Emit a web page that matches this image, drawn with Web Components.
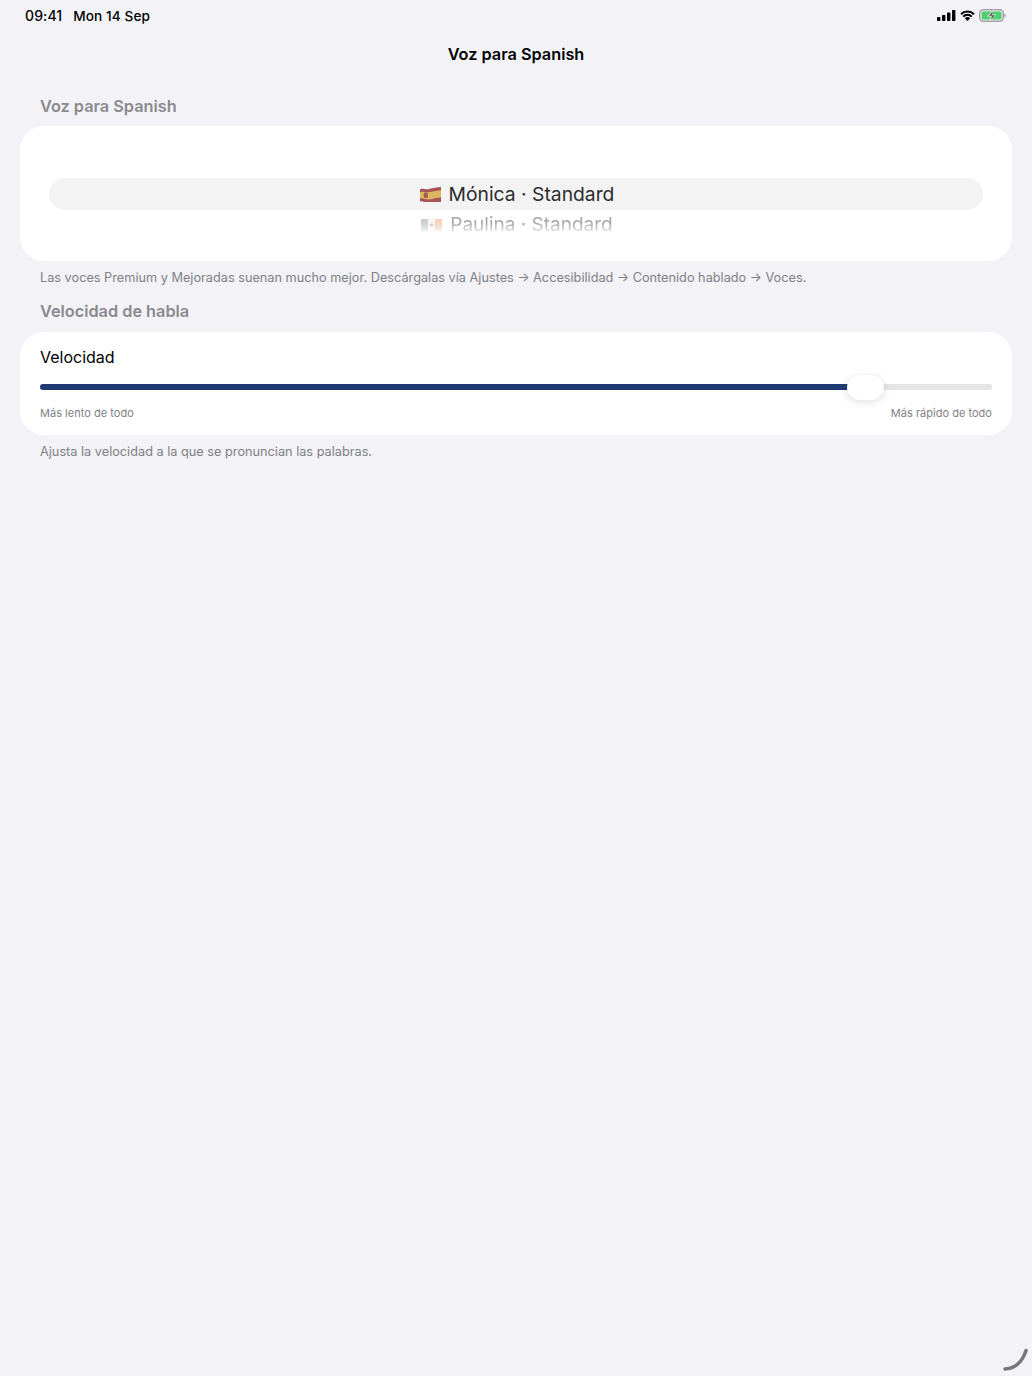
<!doctype html>
<html>
<head>
<meta charset="utf-8">
<style>
html, body { margin: 0; padding: 0; background: #f2f2f7; }
body { width: 1032px; height: 1376px; overflow: hidden; position: relative; font-family: Inter, "Noto Sans", sans-serif; }
</style>
</head>
<body>
<status-bar></status-bar>
<nav-title>Voz para Spanish</nav-title>
<settings-section heading="Voz para Spanish" note="Las voces Premium y Mejoradas suenan mucho mejor. Descárgalas vía Ajustes → Accesibilidad → Contenido hablado → Voces." style="--head-top:19px">
	<voice-picker></voice-picker>
</settings-section>
<settings-section heading="Velocidad de habla" note="Ajusta la velocidad a la que se pronuncian las palabras." style="--head-top:14px;--head-gap:10px">
	<speed-slider></speed-slider>
</settings-section>
<corner-arc></corner-arc>
<script>
customElements.define("status-bar", class extends HTMLElement {
	connectedCallback() {
		this.attachShadow({ mode: "open" }).innerHTML = `
		<style>
			:host { display: flex; justify-content: space-between; align-items: center; height: 32px; padding: 0 25px; font-size: 14px; font-weight: 500; color: #000; }
			.time { display: flex; align-items: center; gap: 11px; letter-spacing: .1px; margin-top: -1px; }
			.date { font-size: 13.6px; }
			.icons { display: flex; align-items: center; gap: 4px; margin-right: 1px; margin-top: -1px; }
			svg { display: block; }
		</style>
		<div class="time"><span>09:41</span><span class="date">Mon 14 Sep</span></div>
		<div class="icons">
			<svg width="19" height="11" viewBox="0 0 19 11"><rect x="0" y="7" width="3.4" height="4" rx=".8"/><rect x="5" y="5" width="3.4" height="6" rx=".8"/><rect x="10" y="2.6" width="3.4" height="8.4" rx=".8"/><rect x="15" y="0" width="3.4" height="11" rx=".8"/></svg>
			<svg width="15" height="11" viewBox="0 0 15 11"><path d="M1 4.2a9.2 9.2 0 0 1 13 0M3.2 6.6a6 6 0 0 1 8.6 0" fill="none" stroke="#000" stroke-width="2"/><path d="M7.5 11L4.8 8.3a3.8 3.8 0 0 1 5.4 0z"/></svg>
			<svg width="27" height="13" viewBox="0 0 27 13"><rect x=".75" y=".75" width="23.5" height="11.5" rx="3.4" fill="#e8e8e8" stroke="#a4a4a8" stroke-width="1.5"/><rect x="2.6" y="2.6" width="19.8" height="7.8" rx="1.6" fill="#4fd06e"/><path d="M25.4 4.5c.9.3 1.4 1.1 1.4 2s-.5 1.700-1.400 2z" fill="#a4a4a8"/><path d="M14.8 .2L7.800 7.500h4L10.200 12.800 17.400 5.500h-4z" fill="#e8e8e8"/><path d="M13.900 2.300L9.800 6.700h3.100l-.9 3.900 4.100-4.400h-3.100z" fill="#58585c"/></svg>
		</div>`;
	}
});

customElements.define("nav-title", class extends HTMLElement {
	connectedCallback() {
		this.attachShadow({ mode: "open" }).innerHTML = `
		<style>
			:host { display: block; height: 44px; line-height: 44px; text-align: center; font-size: 16.3px; font-weight: 600; color: #000; }
		</style>
		<slot></slot>`;
	}
});

customElements.define("settings-section", class extends HTMLElement {
	connectedCallback() {
		this.attachShadow({ mode: "open" }).innerHTML = `
		<style>
			:host { display: block; padding: 0 20px; }
			h2 { margin: var(--head-top, 0) 0 var(--head-gap, 9px) 20px; height: 22px; line-height: 22px; font-size: 16.3px; font-weight: 600; color: #8a8a8e; }
			.card { background: #fff; border-radius: 24px; overflow: hidden; }
			p { margin: 8px 20px 0; height: 17px; line-height: 17px; font-size: 12.72px; color: #818185; }
		</style>
		<h2>${this.getAttribute("heading")}</h2>
		<div class="card"><slot></slot></div>
		<p>${this.getAttribute("note")}</p>`;
	}
});

customElements.define("voice-picker", class extends HTMLElement {
	connectedCallback() {
		this.attachShadow({ mode: "open" }).innerHTML = `
		<style>
			:host { display: block; height: 135px; padding: 52px 29px 0; box-sizing: border-box; color: #2b2b2d; }
			.row { display: flex; justify-content: center; align-items: center; gap: 8px; padding-left: 2px; }
			.sel { height: 32px; background: #f3f3f3; border-radius: 16px; font-size: 19.3px; }
			.next { height: 28px; margin-top: 3px; align-items: flex-start; font-size: 19px; line-height: 24px; color: #a8a8aa;
				-webkit-mask-image: linear-gradient(#000 35%, rgba(0,0,0,.4) 62%, transparent 72%); mask-image: linear-gradient(#000 35%, rgba(0,0,0,.4) 62%, transparent 72%); }
			svg { display: block; }
			.next svg { margin-top: 6px; opacity: .6; }
		</style>
		<div class="row sel">
			<svg width="21" height="15" viewBox="0 0 21 15"><path d="M0 2.200C3 .6 5 3 9 2s8-2 12-2v15c-4 0-7 .8-11 1.600S3 13 0 14.600z" fill="#a8525a"/><path d="M0 5.200C3 4 6 6 10 5s7-1.600 11-1.600v7.200c-4 0-7 1-11 1.800S3 10.600 0 11.400z" fill="#dcb660"/><rect x="3.800" y="5.500" width="4" height="5.500" rx="1.200" fill="#a25a4c"/></svg>
			<span>Mónica · Standard</span>
		</div>
		<div class="row next">
			<svg width="21" height="12" viewBox="0 0 21 12"><rect width="7" height="12" fill="#a7b3ad"/><rect x="7" width="7" height="12" fill="#f4f1ec"/><rect x="14" width="7" height="12" fill="#eeb493"/><circle cx="10.500" cy="6" r="1.600" fill="#b79a7a"/></svg>
			<span>Paulina · Standard</span>
		</div>`;
	}
});

customElements.define("speed-slider", class extends HTMLElement {
	connectedCallback() {
		this.attachShadow({ mode: "open" }).innerHTML = `
		<style>
			:host { display: block; height: 103px; padding: 14px 20px 0; box-sizing: border-box; }
			.label { height: 22px; line-height: 22px; font-size: 16px; color: #000; }
			.track { position: relative; height: 6px; margin-top: 16px; border-radius: 3px; background: #e5e5e5; }
			.fill { width: 808px; height: 100%; border-radius: 3px 0 0 3px; background: #223a73; }
			.thumb { position: absolute; left: 807px; top: -9px; width: 37px; height: 25px; border-radius: 13px; background: #fff; box-shadow: 0 2px 8px rgba(0,0,0,.12), 0 0 2px rgba(0,0,0,.05); }
			.ends { display: flex; justify-content: space-between; margin-top: 15px; height: 16px; line-height: 16px; font-size: 11px; letter-spacing: .02px; color: #818185; }
		</style>
		<div class="label">Velocidad</div>
		<div class="track"><div class="fill"></div><div class="thumb"></div></div>
		<div class="ends"><span>Más lento de todo</span><span>Más rápido de todo</span></div>`;
	}
});

customElements.define("corner-arc", class extends HTMLElement {
	connectedCallback() {
		this.attachShadow({ mode: "open" }).innerHTML = `
		<style>
			:host { position: absolute; right: 0; bottom: 0; width: 32px; height: 32px; }
			svg { display: block; }
		</style>
		<svg width="32" height="32" viewBox="0 0 32 32"><path d="M5 25C14.500 24.500 22.500 18 26 6.500" fill="none" stroke="#77777b" stroke-width="3.500" stroke-linecap="round"/></svg>`;
	}
});
</script>
</body>
</html>
